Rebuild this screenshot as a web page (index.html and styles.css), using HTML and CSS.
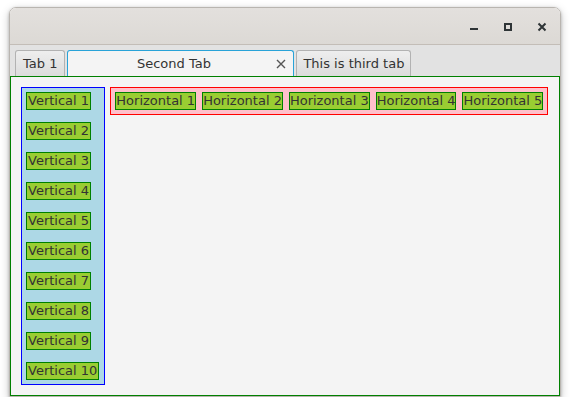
FILE: index.html
```html
<!DOCTYPE html>
<html>
<head>
<meta charset="utf-8">
<link rel="stylesheet" href="styles.css">
</head>
<body>
<div class="window">
  <div class="titlebar">
    <svg class="wbtn" viewBox="0 0 16 16" width="16" height="16"><rect x="4" y="9" width="8" height="2" fill="#2e3436"/></svg>
    <svg class="wbtn" viewBox="0 0 16 16" width="16" height="16"><rect x="5" y="5" width="6" height="6" fill="none" stroke="#2e3436" stroke-width="2"/></svg>
    <svg class="wbtn" viewBox="0 0 16 16" width="16" height="16"><path d="M4.5 4.5 L11.5 11.5 M11.5 4.5 L4.5 11.5" stroke="#2e3436" stroke-width="2"/></svg>
  </div>
  <div class="tabbar">
    <div class="tab">Tab 1</div>
    <div class="tab selected">
      <span class="tab-label">Second Tab</span>
      <svg class="tab-close" viewBox="0 0 14 14" width="14" height="14"><path d="M3 3 L11 11 M11 3 L3 11" stroke="#555" stroke-width="1.4"/></svg>
    </div>
    <div class="tab tab-narrow">This is third tab</div>
  </div>
  <div class="content">
    <div class="vbox">
      <div class="lbl">Vertical 1</div>
      <div class="lbl">Vertical 2</div>
      <div class="lbl">Vertical 3</div>
      <div class="lbl">Vertical 4</div>
      <div class="lbl">Vertical 5</div>
      <div class="lbl">Vertical 6</div>
      <div class="lbl">Vertical 7</div>
      <div class="lbl">Vertical 8</div>
      <div class="lbl">Vertical 9</div>
      <div class="lbl">Vertical 10</div>
    </div>
    <div class="hbox">
      <div class="lbl">Horizontal 1</div>
      <div class="lbl">Horizontal 2</div>
      <div class="lbl">Horizontal 3</div>
      <div class="lbl">Horizontal 4</div>
      <div class="lbl">Horizontal 5</div>
    </div>
  </div>
</div>
</body>
</html>
```
FILE: styles.css
```css
html, body {
  margin: 0;
  padding: 0;
  background: #ffffff;
}
body {
  font-family: "DejaVu Sans", sans-serif;
  font-size: 13px;
  color: #333333;
}
.window {
  margin: 7px 0 0 9px;
  width: 550px;
  height: 388px;
  border: 1px solid #b9b5b0;
  border-radius: 7px 7px 0 0;
  overflow: hidden;
  box-shadow: 0 1px 3px rgba(0,0,0,0.25), 0 3px 10px rgba(0,0,0,0.22);
  display: flex;
  flex-direction: column;
}
.titlebar {
  flex: none;
  background: linear-gradient(#e3e0dd, #dcd9d5);
  border-bottom: 1px solid #c3bdb7;
  display: flex;
  justify-content: flex-end;
  align-items: flex-start;
  gap: 18px;
  padding: 11px 10px 0 0;
  height: 25px;
}
.wbtn {
  display: block;
}
.tabbar {
  height: 31px;
  flex: none;
  background: #e2e2e2;
  display: flex;
  align-items: flex-end;
  gap: 2px;
  padding-left: 5px;
}
.tab {
  height: 25px;
  border: 1px solid #b2b2b2;
  border-bottom: none;
  border-radius: 3px 3px 0 0;
  background: linear-gradient(#eeeeee, #dcdcdc);
  padding: 0 7px;
  display: flex;
  align-items: center;
  line-height: 16px;
  white-space: nowrap;
}
.tab.tab-narrow {
  padding: 0 6px;
}
.tab.selected {
  width: 213px;
  padding-right: 5px;
  background: #f4f4f4;
  border-color: #29a3d8;
}
.tab-label {
  flex: 1;
  text-align: center;
}
.tab-close {
  display: block;
  margin-left: 2px;
  flex: none;
}
.content {
  flex: 1;
  background: #f4f4f4;
  border: 1px solid #008000;
  padding: 10px;
  display: flex;
  align-items: flex-start;
  gap: 5px;
}
.vbox {
  background: #add8e6;
  border: 1px solid #0000ff;
  padding: 4px 5px 4px 4px;
  display: flex;
  flex-direction: column;
  align-items: flex-start;
  gap: 12px;
}
.vbox .lbl {
  padding: 0 1px;
}
.hbox {
  background: #ffc0cb;
  border: 1px solid #ff0000;
  padding: 4px;
  display: flex;
  align-items: flex-start;
  gap: 6px;
}
.lbl {
  background: #9acd32;
  border: 1px solid #008000;
  line-height: 16px;
  white-space: nowrap;
}
```
